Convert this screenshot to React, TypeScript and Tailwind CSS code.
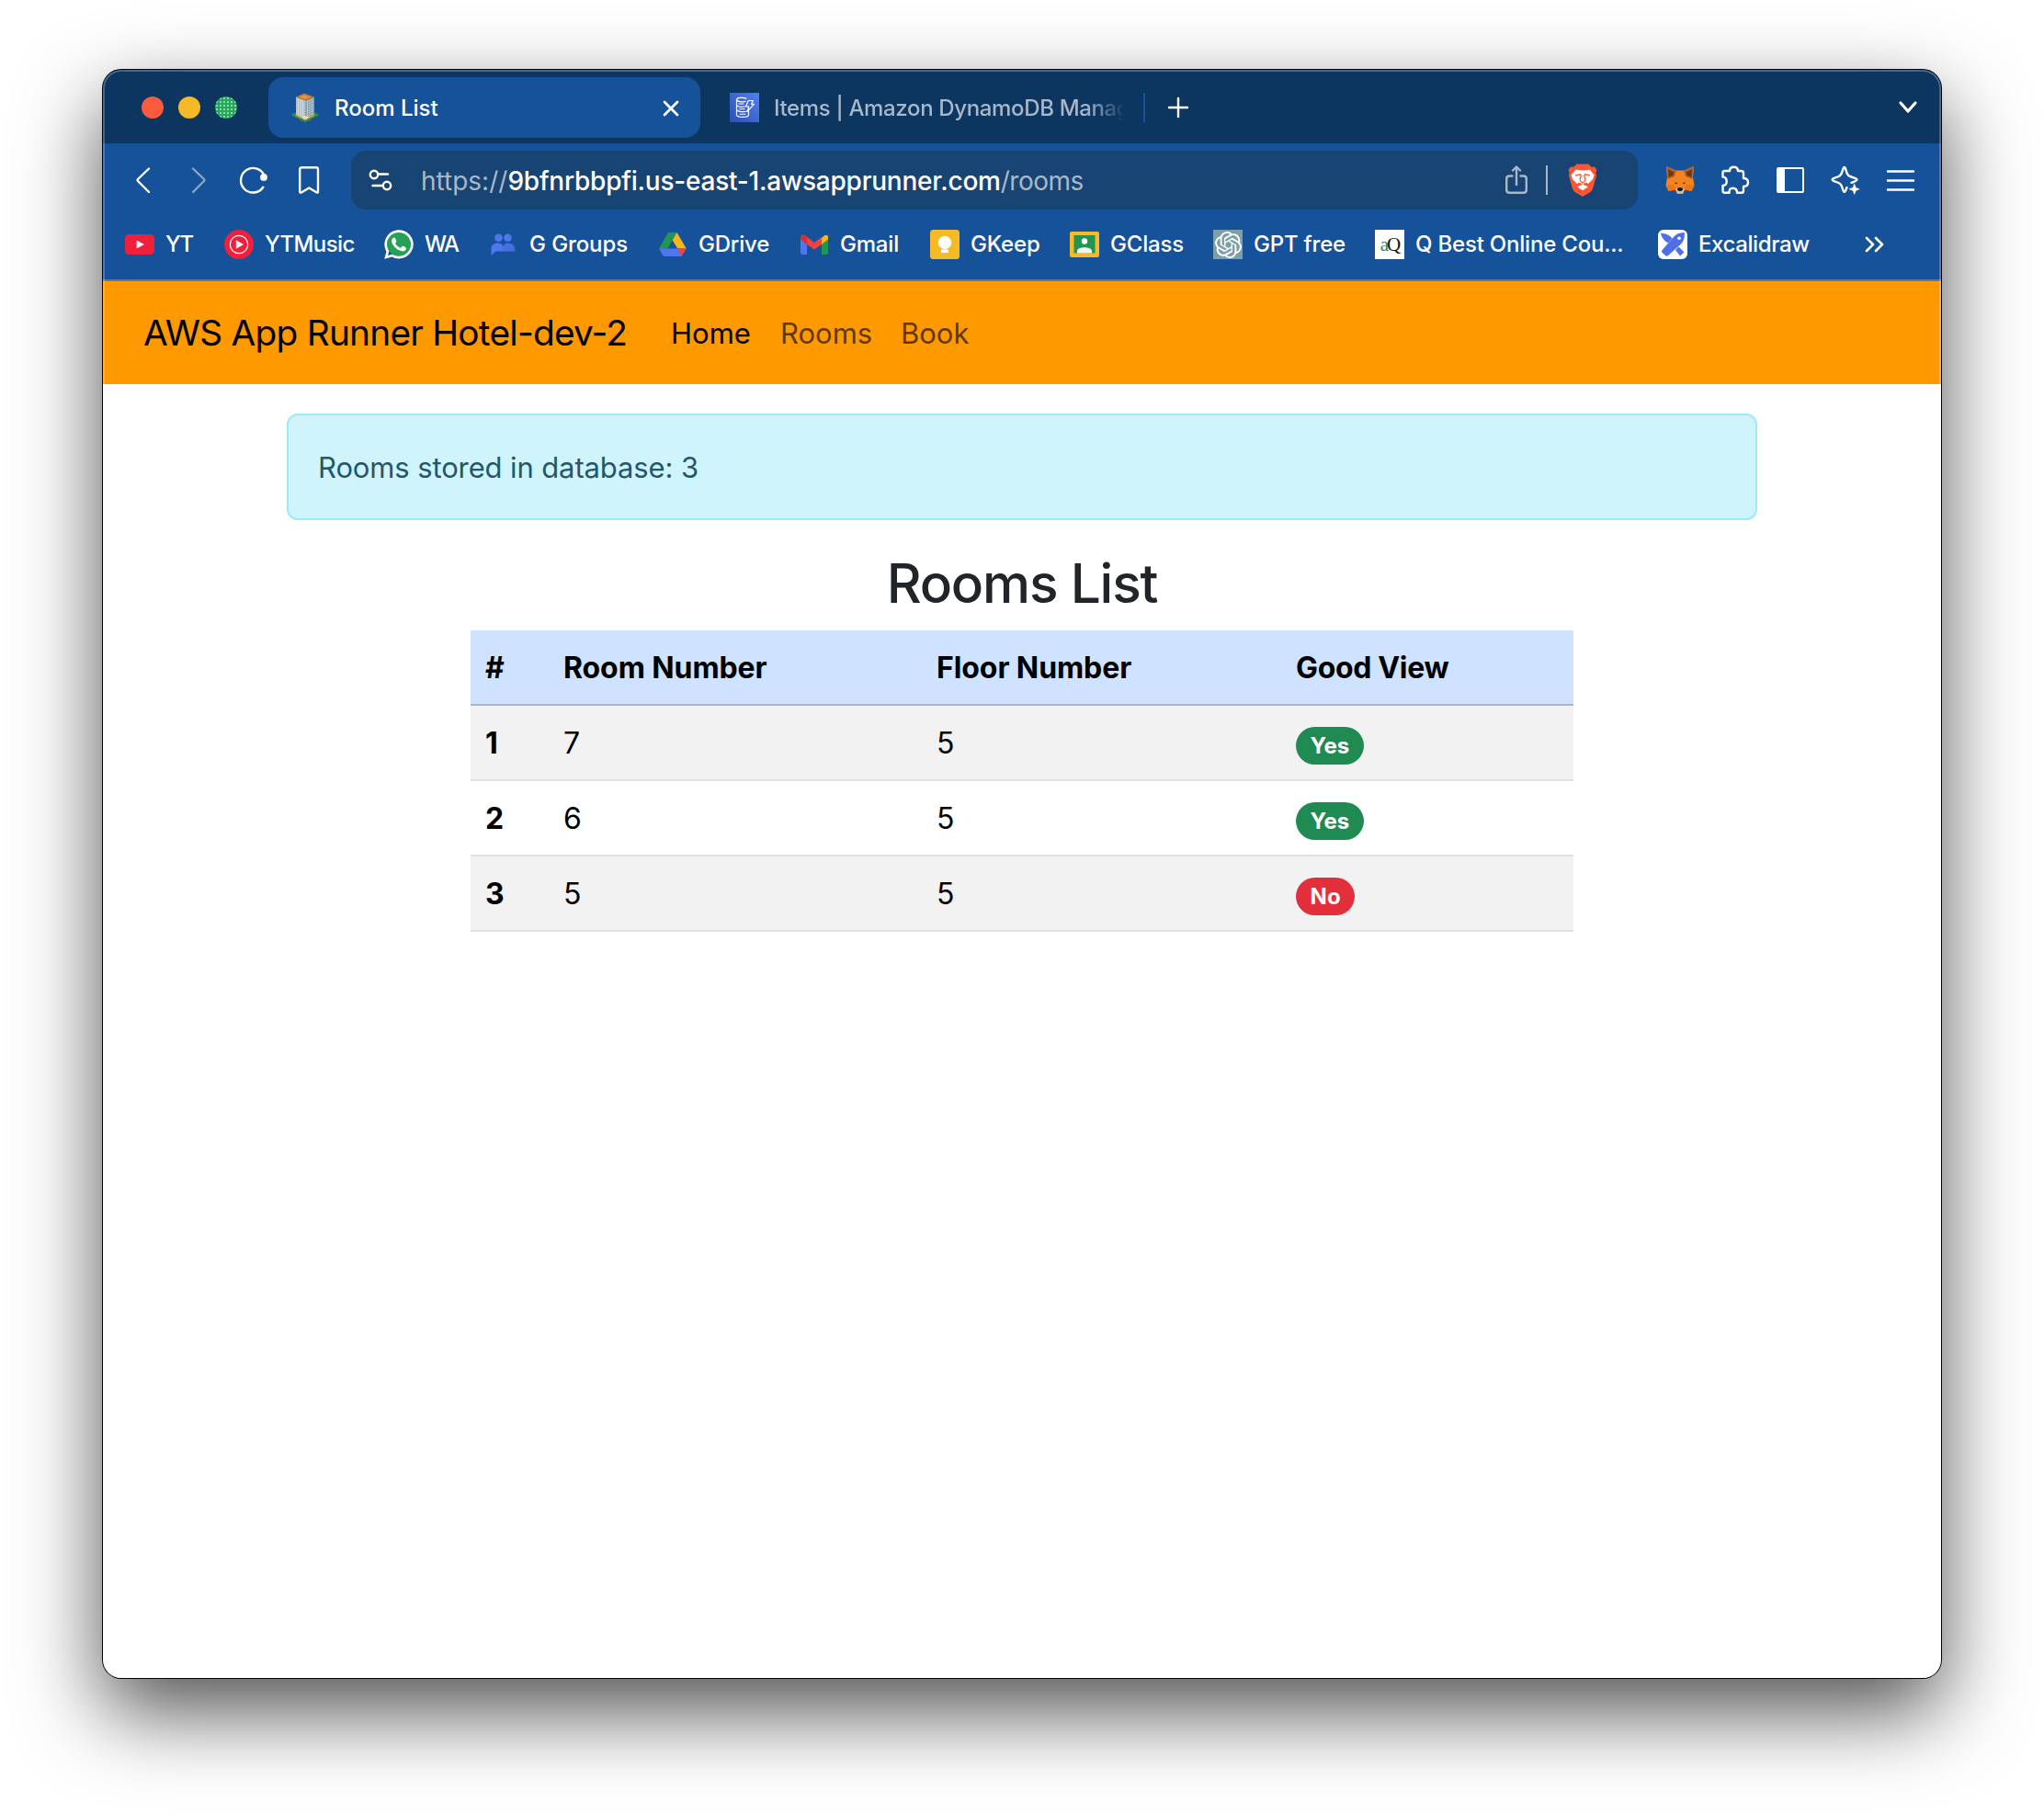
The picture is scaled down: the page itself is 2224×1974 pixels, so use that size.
import React from "react";
import { FaWhatsapp } from "react-icons/fa";
import { SiOpenai } from "react-icons/si";

/* ---------- favicons and bookmark icons ---------- */

const Building = () => (
  <svg className="size-8" viewBox="0 0 32 32">
    <path d="M1 24 L10 20 L24 20 L31 24 L16 32 Z" fill="#3f8f3a" />
    <path d="M4 24 L15 19 L28 24 L16 30 Z" fill="#d9a13c" />
    <path d="M6 4.500 L16 8 L16 28 L6 23.500 Z" fill="#b4c3cb" />
    <path d="M16 8 L26 4.500 L26 23.500 L16 28 Z" fill="#8ba2b1" />
    <path d="M6 4.500 L15 0.500 L26 4.500 L16 8.500 Z" fill="#c9771f" />
    <path d="M9.500 4.600 L15 2.400 L22 4.600 L16 6.800 Z" fill="#d8975a" />
    <path d="M8.500 7V24 M11 8V25 M13.500 9V26 M18.500 9V26 M21 8V25 M23.500 7V24" stroke="#e4ebee" strokeWidth="0.900" strokeDasharray="1.500 1" />
    <path d="M11 26.500 L16 29 L21 26.500 L16 25 Z" fill="#e9d9c4" />
    <circle cx="4" cy="24" r="2" fill="#2c8f3f" />
    <circle cx="28" cy="24" r="2" fill="#2c8f3f" />
    <circle cx="12" cy="29" r="1.500" fill="#2c8f3f" />
    <circle cx="21" cy="29" r="1.500" fill="#2c8f3f" />
  </svg>
);

const Dynamo = () => (
  <svg className="size-8" viewBox="0 0 32 32" fill="none" stroke="#fff" strokeWidth="1.200" strokeLinejoin="round" strokeLinecap="round">
    <defs>
      <linearGradient id="dynamo" x1="0" y1="1" x2="1" y2="0">
        <stop offset="0" stopColor="#2e4fb0" />
        <stop offset="1" stopColor="#527ff5" />
      </linearGradient>
    </defs>
    <rect width="32" height="32" fill="url(#dynamo)" stroke="none" />
    <path d="M18 6.200 C15.500 4.900 7.500 5 7.500 7.500 V24 C7.500 27.200 20.500 27.200 20.500 24 V20" />
    <path d="M7.500 7.500 C8 9.800 14 10.200 17 9.400 M7.500 13 C8.500 15.200 13 15.600 16.500 15 M7.500 18.700 C9 20.800 15 21.200 19.500 19.700" />
    <path d="M10 12 H15 M10.500 17.700 H16 M11 23.200 H17" strokeWidth="1" />
    <path d="M20.200 8.500 H25.500 L23.600 12.300 H26.400 L19.400 20.200 L20.800 15 H17.600 Z" />
  </svg>
);

const YouTube = () => (
  <svg className="size-8" viewBox="0 0 32 32">
    <rect y="5" width="32" height="22" rx="4.500" fill="#f0203c" />
    <path d="M12.700 11.500 L21 16 L12.700 20.500 Z" fill="#fff" />
  </svg>
);

const YTMusic = () => (
  <svg className="size-8" viewBox="0 0 32 32">
    <circle cx="16" cy="16" r="16" fill="#f0203c" />
    <circle cx="16" cy="16" r="9.700" fill="none" stroke="#fff" strokeWidth="1.200" />
    <path d="M12.800 11.300 L21 16 L12.800 20.700 Z" fill="#fff" />
  </svg>
);

const WhatsApp = () => (
  <span className="relative block size-8">
    <span className="absolute left-[3px] top-[2px] size-[27px] rounded-full bg-[#25a055]" />
    <FaWhatsapp className="absolute -left-[2px] -top-[2px] size-9 text-white" />
  </span>
);

const Groups = () => (
  <svg className="size-8" viewBox="0 0 32 32" fill="#4f76ee">
    <circle cx="10.500" cy="8.700" r="4.300" />
    <circle cx="20.500" cy="8.700" r="4.300" />
    <path d="M2.500 28 V20 C2.500 16.500 6 14.500 10 14.500 C13 14.500 15 16 15 18.500 V23.500 H7.500 Z" />
    <path d="M14.200 23.500 C14.200 18 16 14.500 21 14.500 C25.500 14.500 28.500 17.500 28.500 23.500 Z" fillOpacity="0.850" />
  </svg>
);

const Drive = () => (
  <svg className="size-8" viewBox="0 0 32 32">
    <path d="M11 3 H20.500 L10.500 20.500 H1 Z" fill="#229454" />
    <path d="M20.500 3 L30.800 20.500 H21.300 L15.700 11.500 Z" fill="#fbb419" />
    <path d="M1 20.500 H25.500 L25.500 29 H5.800 Z" fill="#4f76ee" />
    <path d="M21.300 20.500 H30.800 L25.500 29 Z" fill="#f0433f" />
  </svg>
);

const Gmail = () => (
  <svg className="size-8" viewBox="0 0 32 32">
    <path d="M1 8 V24.500 Q1 27 3.500 27 H8 V13 Z" fill="#4f76ee" />
    <path d="M31 8 V24.500 Q31 27 28.500 27 H24 V13 Z" fill="#229454" />
    <path d="M24 9 L27 6.200 Q31 4.500 31 8.500 V10.500 L24 16 Z" fill="#fbb419" />
    <path d="M1 10.500 V8.500 Q1.500 4.500 5.500 6 L16 14 L24 8 V16 L16 21.500 Z" fill="#f0433f" />
    <path d="M1 10.500 V8 Q1.500 4.500 5.500 6 L8 8 V16 Z" fill="#d92f32" />
  </svg>
);

const Keep = () => (
  <svg className="size-8" viewBox="0 0 32 32">
    <rect width="32" height="32" rx="3.500" fill="#f5ba26" />
    <circle cx="16" cy="14" r="7.200" fill="#fff" />
    <path d="M12 17 H20 V19.800 H12 Z M12 21.500 H20 V25 H12 Z" fill="#fff" />
  </svg>
);

const Classroom = () => (
  <svg className="size-8" viewBox="0 0 32 32">
    <rect y="2" width="32" height="28" rx="2" fill="#f5ba26" />
    <rect x="4.500" y="6" width="23" height="19.500" fill="#229454" />
    <circle cx="16" cy="12.500" r="3.200" fill="#fff" />
    <path d="M8 25.500 V22.500 C9.500 18.300 22.500 18.300 24 22.500 V25.500 Z" fill="#f1f5f1" />
  </svg>
);

const Gpt = () => (
  <span className="flex size-8 items-center justify-center bg-[#7ba0a8]">
    <SiOpenai className="size-[29px] text-white" />
  </span>
);

const QuantEcon = () => (
  <span className="flex size-8 items-center justify-center bg-white font-['Liberation_Serif',serif] text-[21px] leading-none tracking-[-2px]">
    <span className="text-[#2c8a4f]">a</span>
    <span className="text-[#111]">Q</span>
  </span>
);

const Excalidraw = () => (
  <svg className="size-8" viewBox="0 0 32 32">
    <rect width="32" height="32" rx="6" fill="#fff" />
    <g fill="#4f6fe8">
      <path d="M3 4 C8 3.500 12 5.500 15.500 9.500 L11 14.500 C6.500 12 4 8.500 3 4 Z" />
      <path d="M28.800 3 C29.300 9 27.800 13 24 16.500 L10.500 28.500 L8.800 28.800 L4 24.200 L4.200 22.500 L16.500 8.500 C20 4.300 23.500 3 28.800 3 Z" />
      <path d="M19 22 L22.500 18.500 L28.500 24.500 L24 28.500 Z" />
    </g>
    <circle cx="23" cy="9.300" r="1.800" fill="#fff" />
  </svg>
);

/* ---------- toolbar icons ---------- */

const line = { fill: "none", stroke: "currentColor", strokeWidth: 2.4, strokeLinecap: "round", strokeLinejoin: "round" } as const;

const Back = () => (
  <svg className="h-8 w-[18px]" viewBox="0 0 18 32" {...line}><path d="M15 3.500 L3 15 Q2 16 3 17 L15 29" /></svg>
);
const Forward = () => (
  <svg className="h-8 w-[18px] text-[#8fa5bd]" viewBox="0 0 18 32" {...line}><path d="M3 3.500 L15 15 Q16 16 15 17 L3 29" /></svg>
);
const Reload = () => (
  <svg className="size-8" viewBox="0 0 32 32" {...line}>
    <path d="M26.300 23.800 A13.300 13.300 0 1 1 27.800 11.600" />
    <circle cx="27" cy="12.900" r="3.900" fill="currentColor" stroke="none" />
  </svg>
);
const Bookmark = () => (
  <svg className="h-8 w-6" viewBox="0 0 24 32" {...line}>
    <path d="M4.500 2.200 H20 Q22 2.200 22 4.200 V28.500 Q22 30.400 20.300 29.200 L12.300 24.500 L4.300 29.200 Q2.200 30.400 2.200 28.500 V4.200 Q2.200 2.200 4.500 2.200 Z" />
  </svg>
);
const Tune = () => (
  <svg className="h-6 w-[26px]" viewBox="0 0 26 24" {...line}>
    <circle cx="6" cy="6" r="4.200" />
    <path d="M10.500 5.500 H21" />
    <circle cx="20" cy="18" r="4.200" />
    <path d="M4.500 18 H15.500" />
  </svg>
);
const Share = () => (
  <svg className="h-8 w-6 text-[#a9b8c9]" viewBox="0 0 24 32" {...line}>
    <path d="M7.500 11.500 H4.500 Q1.200 11.500 1.200 14.500 V26.500 Q1.200 29.800 4.500 29.800 H19.500 Q22.800 29.800 22.800 26.500 V14.500 Q22.800 11.500 19.500 11.500 H16.500" />
    <path d="M12 21 V2 M8 5.500 L12 1.500 L16 5.500" />
  </svg>
);
const Lion = () => (
  <svg className="h-9 w-8" viewBox="0 0 32 36">
    <path d="M9.500 0.500 H22.500 L25.500 3.800 L29 3.500 L31.500 7 L30.300 10 L31 13 L27 27.500 Q26 30 23.500 31.500 L16 36 L8.500 31.500 Q6 30 5 27.500 L1 13 L1.700 10 L0.500 7 L3 3.500 L6.500 3.800 Z" fill="#fb5533" />
    <path d="M8.500 6.500 L13 7.300 H19 L23.500 6.500 L28.500 12.500 L27 17 L22 22 L20 20.500 L16.800 22 V23 L22 25.300 L16 29.300 L10 25.300 L15.200 23 V22 L12 20.500 L10 22 L5 17 L3.500 12.500 Z" fill="#fff" />
    <path d="M8 12.800 L13.500 11.800 L14.300 13.300 L12.900 18 M24 12.800 L18.500 11.800 L17.700 13.300 L19.100 18 M12.900 18.500 L16 21 L19.100 18.500" fill="none" stroke="#fb5533" strokeWidth="1.300" />
  </svg>
);
const Fox = () => (
  <svg className="size-8" viewBox="0 0 32 32">
    <path d="M1 1 L12 5.500 H20 L31 1 L30 13 L31.500 22 L28.500 28 L21.500 26.500 L19 30.500 H13 L10.500 26.500 L3.500 28 L0.500 22 L2 13 Z" fill="#f48420" />
    <path d="M1 1 L12 5.500 L10 12 L2.500 15 L2 9 Z M31 1 L20 5.500 L22 12 L29.500 15 L30 9 Z" fill="#b5602a" />
    <path d="M3 4 L9.500 7.500 L8.500 11 L3.500 13 Z M29 4 L22.500 7.500 L23.500 11 L28.500 13 Z" fill="#6b3a17" />
    <path d="M0.500 22 L10 20.500 L11.500 26.500 L3.500 28 Z M31.500 22 L22 20.500 L20.500 26.500 L28.500 28 Z" fill="#e8761b" />
    <path d="M11.500 26 L13 24.500 H19 L20.500 26 L19 30.800 H13 Z" fill="#c9c4bd" />
    <path d="M13.500 24.300 H18.500 L19 27 L16 28.200 L13 27 Z" fill="#161616" />
    <path d="M10 18 L13.500 19.500 L11.500 20.400 Z M22 18 L18.500 19.500 L20.500 20.400 Z" fill="#233447" />
  </svg>
);
const Puzzle = () => (
  <svg className="size-8" viewBox="-0.500 -0.500 32 32" {...line}>
    <path d="M4 5.500 H9.500 C9.500 2.500 11 1.200 14 1.200 S18.500 2.500 18.500 5.500 H22 Q24.500 5.500 24.500 8 V13.500 C28 13.500 29.500 15.500 29.500 18 S28 22.500 24.500 22.500 V27 Q24.500 29.300 22.500 29.300 H17.500 C17.500 25.500 16 24.200 13 24.200 S9 25.500 9 29.300 H4 Q2 29.300 2 27 V21.500 C5 21.500 6.200 19.500 6.200 17 S5 12 2 12 V7.500 Q2 5.500 4 5.500 Z" />
  </svg>
);
const SidePanel = () => (
  <svg className="size-8" viewBox="0 0 32 32">
    <rect x="2" y="3" width="28" height="26" rx="1" {...line} strokeWidth="2" />
    <path d="M2 3 H10 V29 H2 Z" fill="currentColor" />
  </svg>
);
const Sparkle = () => (
  <svg className="size-8" viewBox="0 0 32 32" {...line}>
    <path d="M22.500 18.800 L27 17 Q30 15.600 27 14.200 L21 12 Q18.700 11 17.700 8.800 L16 3.500 Q14.800 0.300 13.500 3.500 L11.700 8.800 Q10.700 11 8.500 12 L3 14.200 Q0.300 15.500 3 16.800 L8.500 19 Q10.700 20 11.700 22.200 L13.500 27.200 Q14.800 30.200 16.200 27.200 L17.500 24" />
    <path d="M25.700 20 L27.300 24.200 L31.300 25.800 L27.300 27.400 L25.700 31.500 L24.100 27.400 L20 25.800 L24.100 24.200 Z" fill="currentColor" strokeWidth="0.500" />
  </svg>
);
const Menu = () => (
  <svg className="size-8" viewBox="0 0 32 32" {...line}><path d="M2 6.500 H30 M2 16.500 H30 M2 26.500 H30" /></svg>
);

/* ---------- data ---------- */

const bookmarks = [
  { label: "YT", icon: <YouTube />, width: "w-[108px]", tracking: "tracking-[-1.500px]" },
  { label: "YTMusic", icon: <YTMusic />, width: "w-[174px]", tracking: "tracking-[-0.600px]" },
  { label: "WA", icon: <WhatsApp />, width: "w-[114px]", tracking: "tracking-[-1.500px]" },
  { label: "G Groups", icon: <Groups />, width: "w-[184px]", tracking: "tracking-[-0.100px]" },
  { label: "GDrive", icon: <Drive />, width: "w-[154px]", tracking: "tracking-[-0.200px]" },
  { label: "Gmail", icon: <Gmail />, width: "w-[142px]", tracking: "tracking-[-0.200px]" },
  { label: "GKeep", icon: <Keep />, width: "w-[152px]", tracking: "tracking-[-0.200px]" },
  { label: "GClass", icon: <Classroom />, width: "w-[156px]", tracking: "tracking-[-0.200px]" },
  { label: "GPT free", icon: <Gpt />, width: "w-[176px]", tracking: "tracking-[-0.200px]" },
  { label: "Q Best Online Cou...", icon: <QuantEcon />, width: "w-[308px]", tracking: "tracking-[-0.200px]" },
  { label: "Excalidraw", icon: <Excalidraw />, width: "w-[225px]", tracking: "tracking-[-0.400px]" },
];

const rooms = [
  { id: 1, room: 7, floor: 5, view: true },
  { id: 2, room: 6, floor: 5, view: true },
  { id: 3, room: 5, floor: 5, view: false },
];

/* ---------- browser chrome ---------- */

function TabStrip() {
  return (
    <div className="flex h-20 items-center bg-[#0c3560] pl-[42px] pr-6 pt-[2px] text-2xl font-medium text-white">
      <div className="flex w-[138px] gap-4">
        <span className="size-6 rounded-full bg-[#fb5a3c]" />
        <span className="size-6 rounded-full bg-[#f5ba26]" />
        <span className="size-6 rounded-full bg-[#2ba45c] bg-[radial-gradient(#7fe0ae_0.800px,transparent_1.200px)] bg-[size:4px_4px]" />
      </div>
      <div className="flex h-[66px] w-[470px] items-center rounded-2xl bg-[#15529a] pl-6 pr-[21px]">
        <Building />
        <span className="ml-4 flex-1 pt-0.5">Room List</span>
        <svg className="size-[22px]" viewBox="0 0 22 22" {...line} strokeWidth="2.800"><path d="M4 5 L18 19 M18 5 L4 19" /></svg>
      </div>
      <div className="ml-8 flex w-[450px] items-center">
        <Dynamo />
        <span className="ml-4 w-[382px] whitespace-nowrap pt-0.5 tracking-[-0.350px] text-[#a9b8c9] [mask-image:linear-gradient(to_right,#000_89%,transparent_100%)]">Items | Amazon DynamoDB Manag</span>
      </div>
      <span className="h-8 w-0.5 bg-[#15529a]" />
      <svg className="ml-6 size-6" viewBox="0 0 24 24" {...line}><path d="M12 2 V22 M2 12 H22" /></svg>
      <svg className="ml-auto h-4 w-6" viewBox="0 0 24 16" {...line} strokeWidth="3.200"><path d="M4 3 L12 12 L20 3" /></svg>
    </div>
  );
}

function Toolbar() {
  return (
    <div className="flex h-20 items-center pr-[26px] text-white">
      <div className="flex w-[270px] items-center pl-[35px]">
        <Back />
        <span className="ml-[42px] flex"><Forward /></span>
        <span className="ml-[35px] flex"><Reload /></span>
        <span className="ml-[32px] flex"><Bookmark /></span>
      </div>
      <div className="flex h-16 w-[1400px] items-center rounded-2xl bg-[#184473] pl-[19px] pr-[44px]">
        <Tune />
        <span className="ml-[31px] flex-1 whitespace-nowrap pt-px text-[28px] font-medium tracking-[-0.220px]">
          <span className="font-normal tracking-normal text-[#a9b8c9]">https://</span>
          9bfnrbbpfi.us-east-1.awsapprunner.com
          <span className="font-normal tracking-[-0.500px] text-[#a9b8c9]">/rooms</span>
        </span>
        <Share />
        <span className="ml-5 h-8 w-0.5 bg-[#a9b8c9]" />
        <span className="ml-[22px] flex"><Lion /></span>
      </div>
      <div className="ml-[30px] flex gap-7">
        <Fox />
        <Puzzle />
        <SidePanel />
        <Sparkle />
        <Menu />
      </div>
    </div>
  );
}

function BookmarkBar() {
  return (
    <div className="flex h-[68px] items-center pb-2 pl-6 text-2xl font-medium text-white">
      {bookmarks.map((b) => (
        <div key={b.label} className={`flex shrink-0 items-center whitespace-nowrap ${b.width}`}>
          {b.icon}
          <span className={`ml-3 ${b.tracking}`}>{b.label}</span>
        </div>
      ))}
      <svg className="h-5 w-6 shrink-0" viewBox="0 0 24 20" {...line} strokeWidth="2.600"><path d="M2 3 L9 10 L2 17 M12 3 L19 10 L12 17" /></svg>
    </div>
  );
}

/* ---------- page ---------- */

function Page() {
  return (
    <main className="flex-1 bg-white">
      <nav className="flex h-28 items-center bg-[#ff9900] pl-11 text-[31px] text-black">
        <span className="w-[574px] whitespace-nowrap pt-px text-[38.800px] tracking-[-0.760px]">AWS App Runner Hotel-dev-2</span>
        <div className="flex pt-[3px]">
          <span className="w-[119px]">Home</span>
          <span className="w-[131px] text-black/65">Rooms</span>
          <span className="text-black/65">Book</span>
        </div>
      </nav>
      <div className="mx-[200px] mt-8 flex h-[116px] items-center rounded-xl border-2 border-[#9eeaf9] bg-[#cff4fc] px-8 pt-0.5 text-[31px] tracking-[-0.120px] text-[#25566c]">
        Rooms stored in database: 3
      </div>
      <h2 className="mt-[33px] text-center text-[58.600px] font-medium leading-[72px] tracking-[-1.200px] text-[#212529]">Rooms List</h2>
      <table className="mx-auto mt-[15px] w-[1200px] table-fixed border-separate border-spacing-0 text-left text-[32px] leading-[48px] text-black">
        <colgroup>
          <col className="w-[85px]" />
          <col className="w-[406px]" />
          <col className="w-[391px]" />
          <col />
        </colgroup>
        <thead>
          <tr className="bg-[#cfe2ff] [&>th]:border-b-2 [&>th]:border-[#a6b5cc] [&>th]:px-4 [&>th]:pb-[15px] [&>th]:pt-[17px] [&>th]:font-bold">
            <th>#</th>
            <th className="tracking-[-0.080px]">Room Number</th>
            <th className="tracking-[-0.080px]">Floor Number</th>
            <th className="tracking-[-0.350px]">Good View</th>
          </tr>
        </thead>
        <tbody>
          {rooms.map((r) => (
            <tr key={r.id} className="odd:bg-[#f2f2f2] [&>*]:border-b-2 [&>*]:border-[#dee2e6] [&>*]:px-4 [&>*]:pb-[15px] [&>*]:pt-[17px]">
              <th className="font-bold">{r.id}</th>
              <td>{r.room}</td>
              <td>{r.floor}</td>
              <td>
                <span className="flex h-12 items-center pt-[5px]">
                  <span className={`flex h-[41px] items-center rounded-full px-[15.600px] text-2xl font-bold text-white ${r.view ? "bg-[#208a53]" : "bg-[#e32f3c]"}`}>
                    {r.view ? "Yes" : "No"}
                  </span>
                </span>
              </td>
            </tr>
          ))}
        </tbody>
      </table>
    </main>
  );
}

export default function App() {
  return (
    <div className="h-[1974px] w-[2224px] overflow-hidden bg-white px-[112px] pt-[76px] font-['Inter',sans-serif]">
      <div className="relative flex h-[1750px] w-[2000px] flex-col overflow-hidden rounded-[20px] bg-[#15529a] shadow-[0_0_0_1px_#000,0_36px_90px_rgba(0,0,0,0.690)]">
        <TabStrip />
        <Toolbar />
        <BookmarkBar />
        <div className="h-0.5 bg-[#5379b5]" />
        <Page />
        <div className="pointer-events-none absolute inset-0 rounded-[20px] shadow-[inset_0_0_0_2px_rgba(255,255,255,0.250)]" />
      </div>
    </div>
  );
}
